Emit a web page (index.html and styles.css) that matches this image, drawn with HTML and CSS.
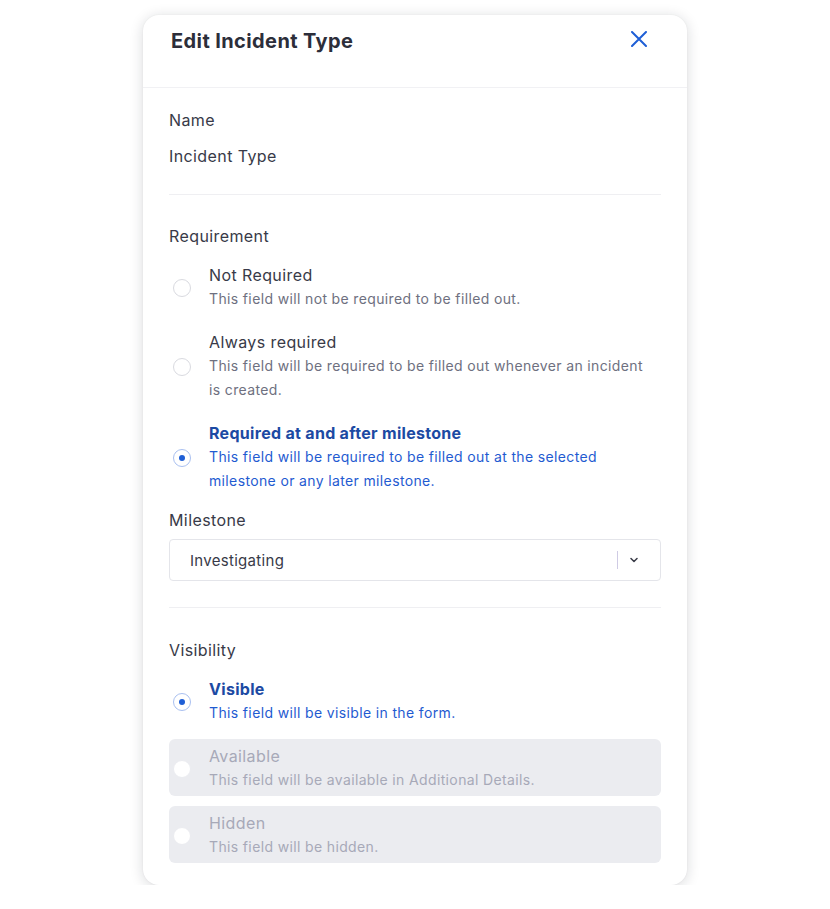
FILE: index.html
```html
<!DOCTYPE html>
<html>
<head>
<meta charset="utf-8">
<link rel="stylesheet" href="styles.css">
</head>
<body>
<div class="page">
  <div class="modal">
    <div class="modal-header">
      <h1 class="modal-title">Edit Incident Type</h1>
      <button class="close" aria-label="Close">
        <svg width="16" height="16" viewBox="0 0 16 16"><path d="M1 1L15 15M15 1L1 15" stroke="#1f5fd6" stroke-width="2" stroke-linecap="round" fill="none"/></svg>
      </button>
    </div>
    <div class="modal-body">
      <div class="section section-name">
        <div class="label">Name</div>
        <div class="value">Incident Type</div>
      </div>
      <div class="divider"></div>
      <div class="section">
        <div class="label">Requirement</div>
        <div class="options">
          <div class="option">
            <span class="radio"></span>
            <div class="option-text">
              <div class="option-title">Not Required</div>
              <div class="option-desc">This field will not be required to be filled out.</div>
            </div>
          </div>
          <div class="option">
            <span class="radio"></span>
            <div class="option-text">
              <div class="option-title">Always required</div>
              <div class="option-desc">This field will be required to be filled out whenever an incident is created.</div>
            </div>
          </div>
          <div class="option checked">
            <span class="radio"></span>
            <div class="option-text">
              <div class="option-title">Required at and after milestone</div>
              <div class="option-desc">This field will be required to be filled out at the selected milestone or any later milestone.</div>
            </div>
          </div>
        </div>
        <div class="label label-milestone">Milestone</div>
        <div class="select">
          <span class="select-value">Investigating</span>
          <span class="select-sep"></span>
          <svg class="chev" width="8" height="6" viewBox="0 0 8 6"><path d="M1 1.5L4 4.5L7 1.5" stroke="#3a3c48" stroke-width="1.5" fill="none" stroke-linecap="round" stroke-linejoin="round"/></svg>
        </div>
      </div>
      <div class="divider divider-2"></div>
      <div class="section">
        <div class="label">Visibility</div>
        <div class="options">
          <div class="option checked">
            <span class="radio"></span>
            <div class="option-text">
              <div class="option-title">Visible</div>
              <div class="option-desc">This field will be visible in the form.</div>
            </div>
          </div>
          <div class="option disabled">
            <span class="radio"></span>
            <div class="option-text">
              <div class="option-title">Available</div>
              <div class="option-desc">This field will be available in Additional Details.</div>
            </div>
          </div>
          <div class="option disabled">
            <span class="radio"></span>
            <div class="option-text">
              <div class="option-title">Hidden</div>
              <div class="option-desc">This field will be hidden.</div>
            </div>
          </div>
        </div>
      </div>
    </div>
  </div>
</div>
</body>
</html>
```
FILE: styles.css
```css
* { box-sizing: border-box; }
html, body { margin: 0; padding: 0; background: #ffffff; }
body { font-family: Inter, "Noto Sans", sans-serif; color: #383a48; }
.page { padding-top: 15px; padding-left: 143px; }
.modal {
  width: 544px;
  height: 870px;
  background: #fff;
  border-radius: 16px;
  box-shadow: 0 2px 14px rgba(20, 24, 40, 0.16), 0 0 2px rgba(20, 24, 40, 0.06);
  overflow: hidden;
}
.modal-header {
  height: 73px;
  border-bottom: 1px solid #f1f1f4;
  display: flex;
  align-items: flex-start;
  justify-content: space-between;
  padding: 12px 40px 0 28px;
}
.modal-title {
  margin: 0;
  font-size: 20px;
  line-height: 28px;
  font-weight: 700;
  color: #2c2e3a;
  letter-spacing: 0.4px;
}
.close {
  border: 0;
  background: none;
  padding: 0;
  margin-top: 4px;
  width: 16px;
  height: 16px;
  display: flex;
}
.modal-body { padding: 20px 26px 0 26px; }
.label { font-size: 16px; line-height: 24px; color: #383a48; letter-spacing: 0.4px; }
.value { font-size: 16px; line-height: 24px; color: #383a48; margin-top: 12px; letter-spacing: 0.4px; }
.divider { height: 1px; background: #efeff2; margin: 26px 0 29px; }
.divider-2 { margin: 26px 0 30px; }
.options { display: flex; flex-direction: column; gap: 10px; margin-top: 10px; }
.option {
  display: flex;
  align-items: center;
  padding: 6px 0 4px;
  border-radius: 6px;
}
.option-text { padding-right: 8px; }
.radio {
  flex: none;
  width: 18px;
  height: 18px;
  border-radius: 50%;
  border: 1px solid #d9dae0;
  background: #fff;
  margin-left: 4px;
  margin-right: 18px;
  position: relative;
}
.option.checked .radio { border-color: #a9c0f0; }
.option.checked .radio::after {
  content: "";
  position: absolute;
  left: 5px; top: 5px;
  width: 6px; height: 6px;
  border-radius: 50%;
  background: #1f5fd6;
}
.option.disabled { background: #ebecf0; }
.option.disabled .radio { border-color: #ebecf0; }
.option-title { font-size: 16px; line-height: 23px; color: #383a48; letter-spacing: 0.4px; }
.option-desc { font-size: 14px; line-height: 24px; color: #6e7080; letter-spacing: 0.36px; }
.option.checked .option-title { font-weight: 700; color: #1c4aa3; letter-spacing: 0.3px; }
.option.checked .option-desc { color: #1f5bd1; }
.option.disabled .option-title,
.option.disabled .option-desc { color: #a7a9b8; }
.label-milestone { margin-top: 11px; }
.select {
  margin-top: 7px;
  height: 42px;
  border: 1px solid #e4e5ea;
  border-radius: 4px;
  display: flex;
  align-items: center;
  padding: 0 22px 0 20px;
}
.select-value { flex: 1; font-size: 15px; color: #383a48; letter-spacing: 0.3px; }
.select-sep { width: 1px; height: 18px; background: #cfcbe4; margin-right: 12px; }
.chev { display: block; }
```
